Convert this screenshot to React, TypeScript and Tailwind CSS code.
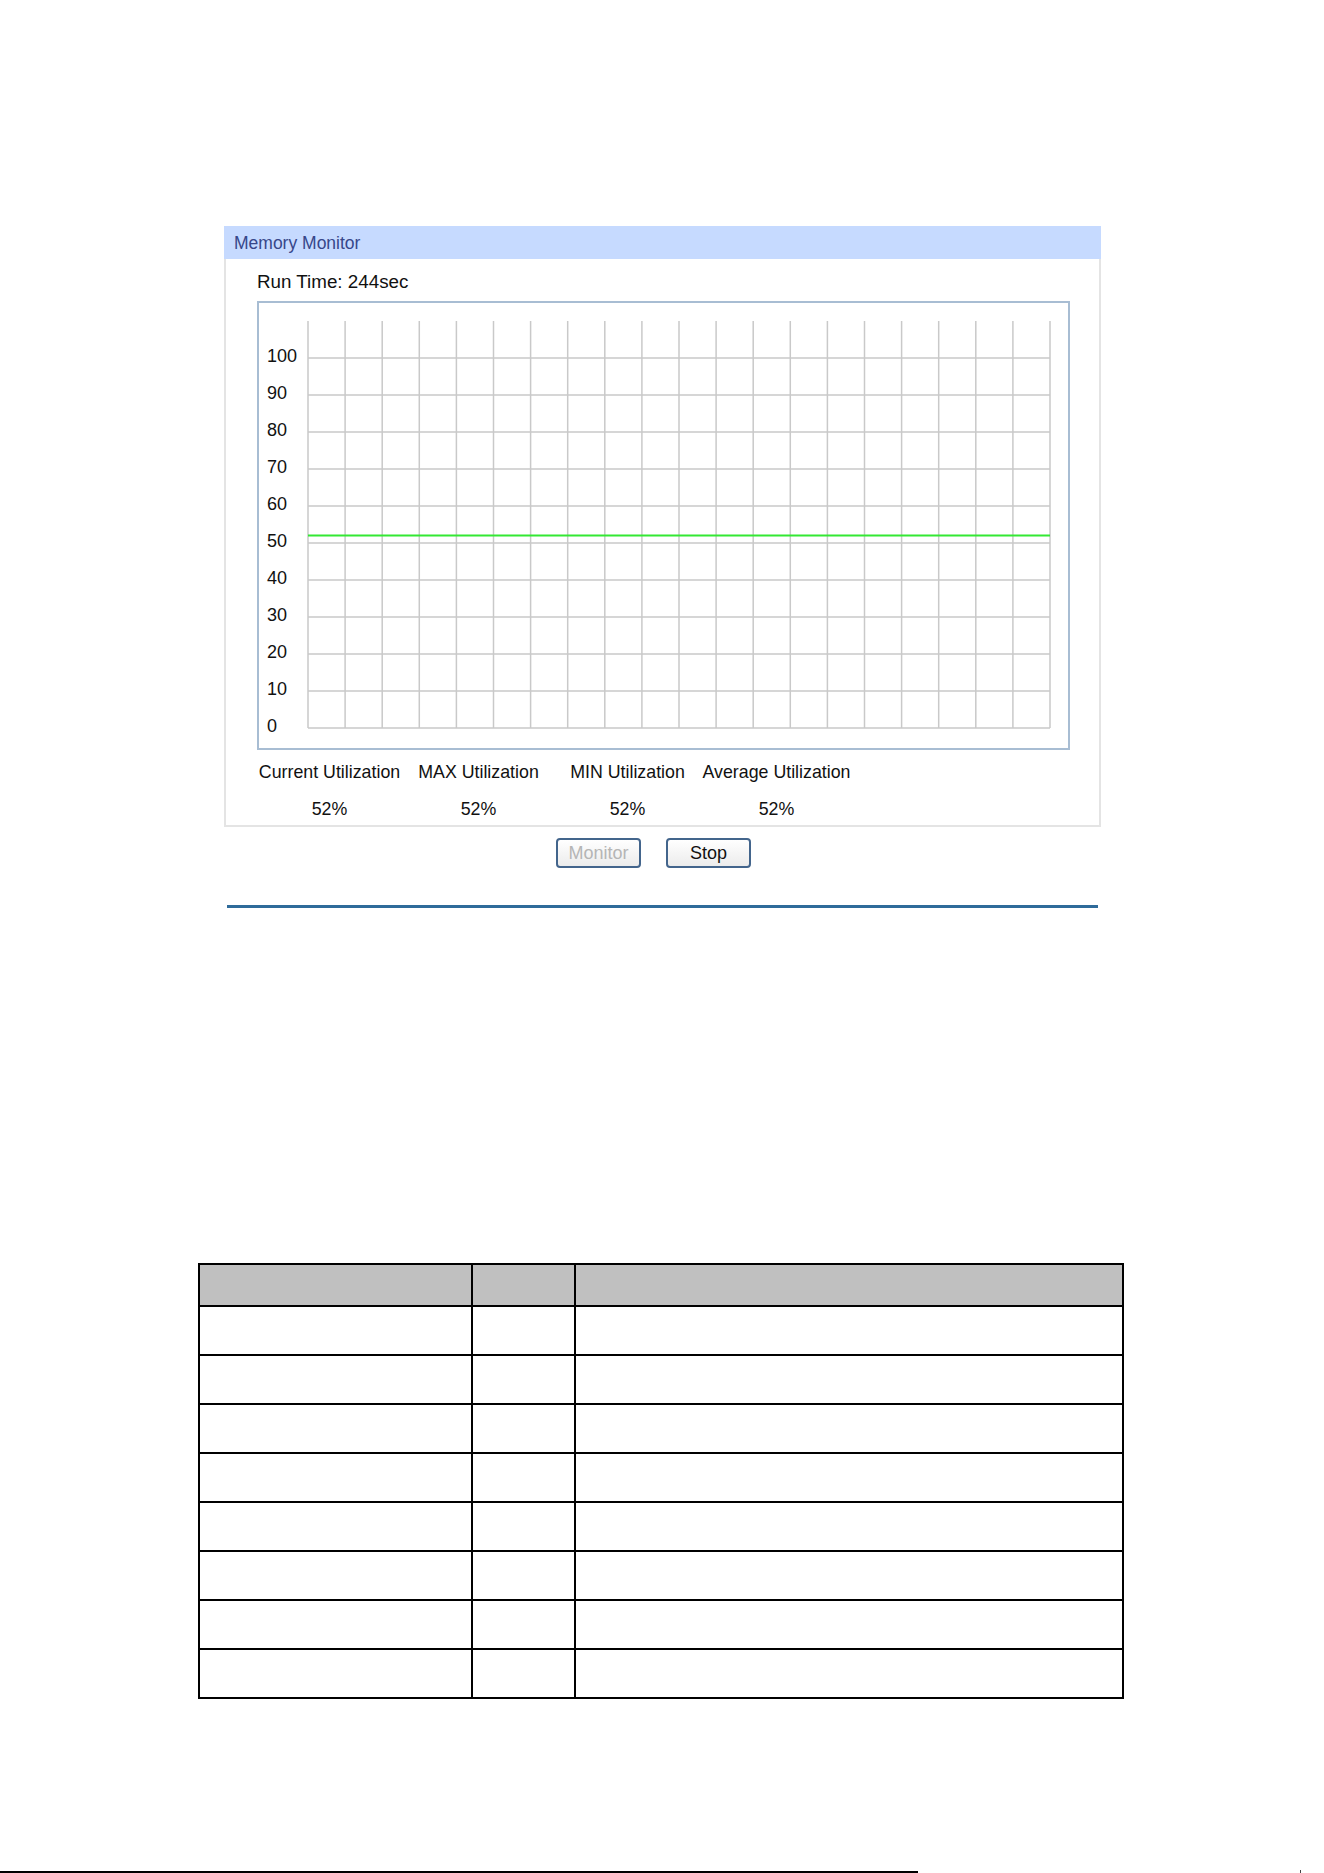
import React from "react";

const yLabels = [100, 90, 80, 70, 60, 50, 40, 30, 20, 10, 0];

const stats = [
  { label: "Current Utilization", value: "52%" },
  { label: "MAX Utilization", value: "52%" },
  { label: "MIN Utilization", value: "52%" },
  { label: "Average Utilization", value: "52%" },
];

// plot area inside the chart frame
const GRID_LEFT = 49;
const GRID_RIGHT = 791;
const GRID_TOP = 18;
const GRID_BOTTOM = 425;
const COLS = 20;
const ROW_STEP = 37;

function UsageChart({ percent }: { percent: number }) {
  const colStep = (GRID_RIGHT - GRID_LEFT) / COLS;
  const zeroY = GRID_BOTTOM;
  const lineY = zeroY - (percent / 10) * ROW_STEP;

  return (
    <svg width={809} height={445} className="block">
      {Array.from({ length: COLS + 1 }).map((_, i) => (
        <line
          key={"v" + i}
          x1={GRID_LEFT + i * colStep}
          x2={GRID_LEFT + i * colStep}
          y1={GRID_TOP}
          y2={GRID_BOTTOM}
          stroke="#c9c9c9"
          strokeWidth={1.5}
        />
      ))}
      {yLabels.map((v, i) => {
        const y = zeroY - (yLabels.length - 1 - i) * ROW_STEP;
        return (
          <g key={"h" + v}>
            <line
              x1={GRID_LEFT}
              x2={GRID_RIGHT}
              y1={y}
              y2={y}
              stroke="#c9c9c9"
              strokeWidth={1.5}
            />
            <text
              x={8}
              y={y + 4}
              fontSize={18}
              fill="#111"
              fontFamily="'Liberation Sans', Arial, sans-serif"
            >
              {v}
            </text>
          </g>
        );
      })}
      <line
        x1={GRID_LEFT}
        x2={GRID_RIGHT}
        y1={lineY}
        y2={lineY}
        stroke="#33e833"
        strokeWidth={2}
      />
    </svg>
  );
}

function PanelButton({
  children,
  disabled,
}: {
  children: React.ReactNode;
  disabled?: boolean;
}) {
  return (
    <button
      type="button"
      disabled={disabled}
      className={
        disabled
          ? "w-[85px] h-[30px] rounded-[4px] border-2 border-[#43658c] bg-gradient-to-b from-white to-[#ececec] text-[18px] leading-none text-[#b5b5b5]"
          : "w-[85px] h-[30px] rounded-[4px] border-2 border-[#43658c] bg-gradient-to-b from-white to-[#ececec] text-[18px] leading-none text-[#111]"
      }
    >
      {children}
    </button>
  );
}

export default function App() {
  return (
    <div className="relative w-[1324px] h-[1873px] overflow-hidden bg-white font-['Liberation_Sans',Arial,sans-serif]">
      <div className="pt-[226px] pl-[224px]">
        {/* Memory Monitor panel */}
        <div className="w-[877px]">
          <div className="h-[33px] bg-[#c6daff] pl-[10px] pt-[1px] flex items-center text-[17.5px] text-[#37478a]">
            Memory Monitor
          </div>
          <div className="border-x-2 border-b-2 border-[#e4e4e4] pl-[31px] pt-[11px] pb-[4px]">
            <div className="text-[18.8px] leading-[24px] text-[#111]">
              Run Time: 244sec
            </div>
            <div className="mt-[7px] w-[813px] h-[449px] border-2 border-[#a8bdd3]">
              <UsageChart percent={52} />
            </div>
            <div className="ml-[-2px] grid grid-cols-[149px_149px_149px_149px] text-center text-[17.8px] leading-[24px] text-[#111]">
              {stats.map((s) => (
                <div key={s.label} className="mt-[10px] whitespace-nowrap">
                  {s.label}
                </div>
              ))}
              {stats.map((s) => (
                <div key={s.label + "-v"} className="mt-[13px]">
                  {s.value}
                </div>
              ))}
            </div>
          </div>
        </div>

        <div className="mt-[11px] ml-[332px] flex gap-[25px]">
          <PanelButton disabled>Monitor</PanelButton>
          <PanelButton>Stop</PanelButton>
        </div>

        <div className="mt-[37px] ml-[3px] w-[871px] h-[3px] bg-[#2f6b9a]" />
      </div>

      {/* empty reference table */}
      <div className="mt-[355px] ml-[198px]">
        <table className="w-[926px] border-collapse">
          <thead>
            <tr className="h-[42px] bg-[#c0c0c0]">
              <th className="w-[273px] border-2 border-black" />
              <th className="w-[103px] border-2 border-black" />
              <th className="border-2 border-black" />
            </tr>
          </thead>
          <tbody>
            {Array.from({ length: 8 }).map((_, i) => (
              <tr key={i} className="h-[49px]">
                <td className="border-2 border-black" />
                <td className="border-2 border-black" />
                <td className="border-2 border-black" />
              </tr>
            ))}
          </tbody>
        </table>
      </div>

      {/* footer rule cut off at the page edge */}
      <div className="absolute left-0 bottom-0 w-[918px] h-[2px] bg-black" />
      <div className="absolute left-[1300px] bottom-0 w-[1px] h-[3px] bg-[#444]" />
    </div>
  );
}
